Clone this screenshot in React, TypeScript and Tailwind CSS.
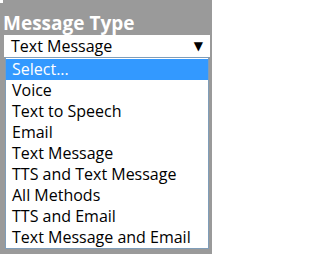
import React from "react";

const items = [
  "Select...",
  "Voice",
  "Text to Speech",
  "Email",
  "Text Message",
  "TTS and Text Message",
  "All Methods",
  "TTS and Email",
  "Text Message and Email",
];

export default function App() {
  return (
    <div
      className="relative w-[212px] h-[254px] bg-[#9a9a9a] overflow-hidden"
      style={{ fontFamily: '"Open Sans", "DejaVu Sans", sans-serif' }}
    >
      <div className="absolute left-0 top-0 w-[3px] h-[3px] bg-white" />
      <div className="h-[35px] pl-[3px] pt-[13px] text-[19px] leading-[20px] font-bold text-white">
        Message Type
      </div>
      <div className="ml-[4px] mr-[2px] h-[22px] bg-white flex items-center pl-[7px] pr-[7px] text-[16px] text-black">
        <span className="flex-1 leading-[20px]">Text Message</span>
        <span className="text-[12px] leading-none">▼</span>
      </div>
      <div className="ml-[5px] mr-[3px] border border-[#7f9db9] bg-white pt-[1px]">
        {items.map((it, i) => (
          <div
            key={it}
            className={
              "h-[21px] flex items-center pl-[6px] text-[16px] leading-[21px] " +
              (i === 0 ? "bg-[#3399ff] text-white" : "text-black")
            }
          >
            {it}
          </div>
        ))}
      </div>
    </div>
  );
}
